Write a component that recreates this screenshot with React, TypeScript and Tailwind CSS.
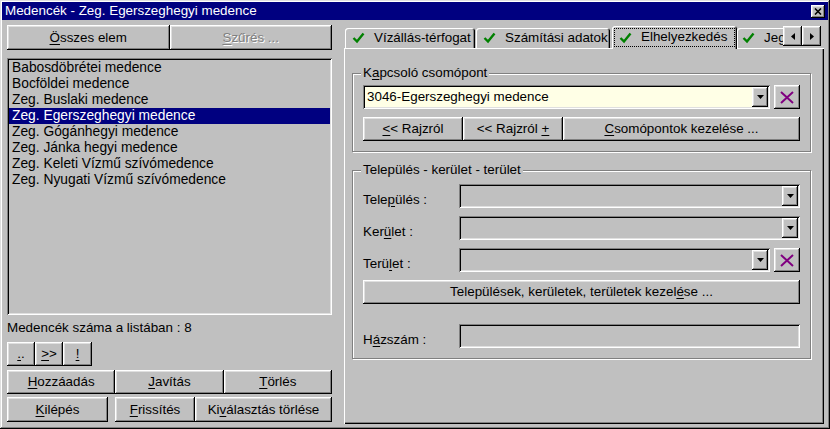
import React from 'react';

// Win95-style bevels
const RAISED = 'bg-[#c0c0c0] shadow-[inset_-1px_-1px_#000,inset_1px_1px_#fff,inset_-2px_-2px_#808080,inset_2px_2px_#dfdfdf]';
const SUNKEN = 'shadow-[inset_1px_1px_#808080,inset_-1px_-1px_#fff,inset_2px_2px_#000,inset_-2px_-2px_#dfdfdf]';

const U: React.FC<{ c: string }> = ({ c }) => (
  <span className="underline underline-offset-[2px]">{c}</span>
);

const Btn: React.FC<{ className?: string; children: React.ReactNode }> = ({ className = '', children }) => (
  <div className={`${RAISED} flex items-center justify-center leading-[16px] ${className}`}>{children}</div>
);

const Check = () => (
  <svg width="13" height="12" viewBox="0 0 13 12" className="shrink-0">
    <path d="M1.5 6 L5 9.5 L11.5 1.5" fill="none" stroke="#008000" strokeWidth="2.4" />
  </svg>
);

const DownArrow = () => (
  <svg width="7" height="4" viewBox="0 0 7 4">
    <polygon points="0,0 7,0 3.5,4" fill="#000" />
  </svg>
);

const XButton = () => (
  <Btn className="w-[26px] h-[24px] shrink-0">
    <svg width="14" height="13" viewBox="0 0 14 13">
      <path d="M1 1 L13 12 M13 1 L1 12" stroke="#800080" strokeWidth="2" />
    </svg>
  </Btn>
);

const Combo: React.FC<{ value?: string; yellow?: boolean; className?: string }> = ({ value, yellow, className = '' }) => (
  <div className={`${SUNKEN} ${yellow ? 'bg-[#ffffe6]' : 'bg-[#c0c0c0]'} h-[24px] flex items-stretch p-[2px] ${className}`}>
    <div className="flex-1 pl-[2px] leading-[20px] truncate">{value}</div>
    <div className={`${RAISED} w-[16px] flex items-center justify-center`}>
      <DownArrow />
    </div>
  </div>
);

const Group: React.FC<{ label: React.ReactNode; className?: string; children: React.ReactNode }> = ({ label, className = '', children }) => (
  <div className={`relative border border-[#808080] shadow-[inset_1px_1px_#fff,1px_1px_#fff] ${className}`}>
    <div className="absolute left-[8px] top-[-9px] px-[2px] bg-[#c0c0c0] leading-[16px]">{label}</div>
    {children}
  </div>
);

const ITEMS = [
  'Babosdöbrétei medence',
  'Bocföldei medence',
  'Zeg. Buslaki medence',
  'Zeg. Egerszeghegyi medence',
  'Zeg. Gógánhegyi medence',
  'Zeg. Jánka hegyi medence',
  'Zeg. Keleti Vízmű szívómedence',
  'Zeg. Nyugati Vízmű szívómedence',
];

const FieldRow: React.FC<{ label: React.ReactNode; children: React.ReactNode; className?: string }> = ({ label, children, className = '' }) => (
  <div className={`flex items-end ${className}`}>
    <div className="w-[96px] leading-[16px] shrink-0">{label}</div>
    {children}
  </div>
);

const TAB = 'h-[20px] flex items-center gap-[9px] bg-[#c0c0c0] rounded-t-[3px] whitespace-nowrap overflow-hidden';

export default function App() {
  return (
    <div className="w-[830px] h-[429px] bg-[#c0c0c0] p-[2px] flex flex-col text-[13.4px] text-black font-['Liberation_Sans',Arial,sans-serif] shadow-[inset_-1px_-1px_#000,inset_1px_1px_#dfdfdf,inset_-2px_-2px_#808080,inset_2px_2px_#fff] overflow-hidden select-none">
      {/* Title bar */}
      <div className="h-[18px] bg-[#000080] flex items-center pl-[3px] pr-[3px] text-white">
        <span className="flex-1 leading-[18px]">Medencék - Zeg. Egerszeghegyi medence</span>
        <div className={`${RAISED} w-[14px] h-[13px] flex items-center justify-center`}>
          <svg width="8" height="7" viewBox="0 0 8 7">
            <path d="M1 0.5 L7 6.5 M7 0.5 L1 6.5" stroke="#000" strokeWidth="1.6" />
          </svg>
        </div>
      </div>

      <div className="flex-1 flex pl-[5px] pt-[5px]">
        {/* Left column */}
        <div className="w-[325px] flex flex-col">
          <div className="flex h-[25px]">
            <Btn className="flex-1"><span><U c="Ö" />sszes elem</span></Btn>
            <Btn className="flex-1 text-[#808080] [text-shadow:1px_1px_0_#fff]"><span><U c="S" />zűrés ...</span></Btn>
          </div>
          <div className={`${SUNKEN} mt-[8px] h-[257px] p-[2px] text-[13.8px]`}>
            {ITEMS.map((it, i) => (
              <div
                key={it}
                className={`h-[16px] leading-[16px] pl-[3px] whitespace-nowrap ${i === 3 ? 'bg-[#000080] text-white' : ''}`}
              >
                {it}
              </div>
            ))}
          </div>
          <div className="mt-[5px] h-[16px] leading-[16px]">Medencék száma a listában : 8</div>
          <div className="mt-[6px] flex h-[24px]">
            <Btn className="w-[28px]"><span><U c="." />.</span></Btn>
            <Btn className="w-[28px]"><span><U c=">" />&gt;</span></Btn>
            <Btn className="w-[29px]"><U c="!" /></Btn>
          </div>
          <div className="mt-[4px] flex h-[24px]">
            <Btn className="flex-1"><span><U c="H" />ozzáadás</span></Btn>
            <Btn className="flex-1"><span><U c="J" />avítás</span></Btn>
            <Btn className="flex-1"><span><U c="T" />örlés</span></Btn>
          </div>
          <div className="mt-[3px] flex h-[25px]">
            <Btn className="w-[101px]"><span><U c="K" />ilépés</span></Btn>
            <Btn className="ml-[7px] w-[80px]"><span><U c="F" />rissítés</span></Btn>
            <Btn className="flex-1"><span>Ki<U c="v" />álasztás törlése</span></Btn>
          </div>
        </div>

        {/* Right column: tabs */}
        <div className="ml-[12px] w-[480px] flex flex-col pt-[1px] pb-[3px]">
          <div className="h-[22px] flex items-end">
            <div className={`${TAB} ml-[1px] w-[130px] pl-[7px] shadow-[inset_1px_1px_#fff,inset_-1px_0_#000,inset_-2px_0_#808080]`}>
              <Check />
              <span>Vízállás-térfogat</span>
            </div>
            <div className={`${TAB} ml-[1px] w-[134px] pl-[7px] shadow-[inset_1px_1px_#fff,inset_-1px_0_#000,inset_-2px_0_#808080]`}>
              <Check />
              <span>Számítási adatok</span>
            </div>
            <div className="relative z-10 ml-[2px] mb-[-1px] w-[125px] h-[23px] bg-[#c0c0c0] rounded-t-[3px] shadow-[inset_1px_1px_#fff,inset_-1px_0_#000,inset_-2px_0_#808080] p-[2px]">
              <div className="h-full flex items-center pl-[4px] gap-[9px] border border-dotted border-black whitespace-nowrap">
                <Check />
                <span>Elhelyezkedés</span>
              </div>
            </div>
            <div className={`${TAB} w-[46px] pl-[5px] rounded-tr-none shadow-[inset_1px_1px_#fff]`}>
              <Check />
              <span>Jeg</span>
            </div>
            <div className="self-start flex h-[20px]">
              <Btn className="w-[19px]">
                <svg width="4" height="7" viewBox="0 0 4 7"><polygon points="4,0 4,7 0,3.5" fill="#000" /></svg>
              </Btn>
              <Btn className="w-[19px]">
                <svg width="4" height="7" viewBox="0 0 4 7"><polygon points="0,0 0,7 4,3.5" fill="#000" /></svg>
              </Btn>
            </div>
          </div>

          {/* Tab page */}
          <div className="flex-1 bg-[#c0c0c0] shadow-[inset_1px_1px_#fff,inset_-1px_-1px_#000,inset_-2px_-2px_#808080] pl-[8px] pr-[13px] pt-[25px]">
            <Group label={<span>K<U c="a" />pcsoló csomópont</span>} className="pl-[10px] pr-[10px] pt-[11px] pb-[10px]">
              <div className="flex gap-[4px]">
                <Combo value="3046-Egerszeghegyi medence" yellow className="flex-1" />
                <XButton />
              </div>
              <div className="mt-[8px] flex h-[24px]">
                <Btn className="w-[100px]"><span><U c="<" />&lt; Rajzról</span></Btn>
                <Btn className="w-[100px]"><span>&lt;&lt; Rajzról <U c="+" /></span></Btn>
                <Btn className="flex-1"><span><U c="C" />somópontok kezelése ...</span></Btn>
              </div>
            </Group>

            <Group label="Település - kerület - terület" className="mt-[18px] pl-[10px] pr-[10px] pt-[13px] pb-[10px]">
              <FieldRow label={<span>Tele<U c="p" />ülés :</span>}>
                <Combo className="flex-1" />
              </FieldRow>
              <FieldRow label={<span>Ker<U c="ü" />let :</span>} className="mt-[8px]">
                <Combo className="flex-1" />
              </FieldRow>
              <FieldRow label={<span>Terü<U c="l" />et :</span>} className="mt-[8px]">
                <div className="flex-1 flex gap-[4px]">
                  <Combo className="flex-1" />
                  <XButton />
                </div>
              </FieldRow>
              <Btn className="mt-[8px] h-[24px]"><span>Települések, kerületek, területek kezel<U c="é" />se ...</span></Btn>
              <FieldRow label={<span>H<U c="á" />zszám :</span>} className="mt-[20px]">
                <div className={`${SUNKEN} flex-1 h-[24px]`} />
              </FieldRow>
            </Group>
          </div>
        </div>
      </div>
    </div>
  );
}
